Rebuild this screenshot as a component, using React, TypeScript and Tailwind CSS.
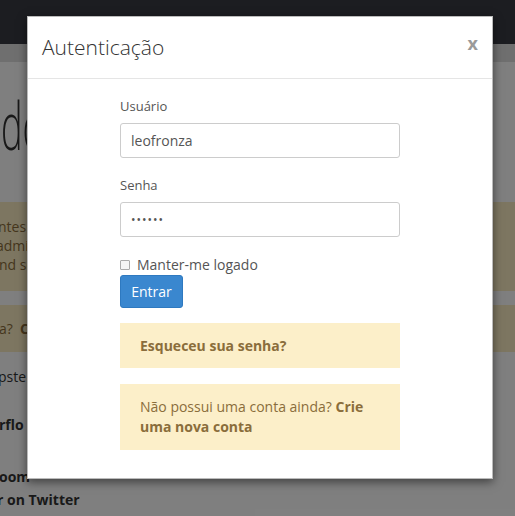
import React from "react";

export default function App() {
  const font = { fontFamily: '"Open Sans", "Noto Sans", sans-serif' };
  return (
    <div className="relative w-[515px] h-[516px] overflow-hidden bg-white" style={font}>
      {/* background page */}
      <div className="flex flex-col text-[14px] text-[#333]">
        <div className="h-[44px] bg-[#393b43]" />
        <div className="h-[18px] bg-[#dedede]" />
        <div className="h-[140px] pt-[22px] pl-[1px] text-[66px] font-light leading-[80px] text-[#333]">
          <span className="inline-block origin-left scale-x-[0.55]">do</span>
        </div>
        <div className="h-[89px] bg-[#fbedc2] text-[#8a6d3b] pt-[15px] leading-[19px] flex flex-col">
          <span className="-ml-[2px]">ntes</span>
          <span className="-ml-[4px]">admi</span>
          <span className="-ml-[1px]">nd se</span>
        </div>
        <div className="h-[14px]" />
        <div className="h-[47px] bg-[#fbedc2] text-[#8a6d3b] leading-[47px] -ml-[1px]">
          a?&nbsp;&nbsp;<b>C</b>
        </div>
        <div className="h-[50px] leading-[50px] -ml-[2px]">pste</div>
        <div className="h-[45px] leading-[45px] font-bold -ml-[1px]">rflo</div>
        <div className="h-[18px]" />
        <div className="leading-[24px] font-bold -ml-[1px]">oom</div>
        <div className="leading-[22px] font-bold -ml-[3px]">r on Twitter</div>
      </div>

      {/* backdrop */}
      <div className="absolute inset-0 bg-black/50" />

      {/* modal */}
      <div className="absolute left-[27px] top-[16px] w-[466px] h-[463px] bg-white border border-[#bbb] shadow-[0_3px_9px_rgba(0,0,0,0.5)] flex flex-col">
        <div className="h-[62px] border-b border-[#e5e5e5] flex items-center justify-between pl-[14px] pr-[14px]">
          <h4 className="text-[21px] font-light text-[#333] leading-none">Autenticação</h4>
          <button className="text-[18px] font-bold text-[#9a9a9a] leading-none -mt-[10px]">x</button>
        </div>
        <div className="flex flex-col px-[92px] pt-[17px] text-[14px] text-[#555]">
          <label className="leading-[20px] mb-[7px] text-[13px]">Usuário</label>
          <div className="h-[35px] border border-[#ccc] rounded-[3px] px-[10px] flex items-center text-[14px] text-[#555]">leofronza</div>
          <label className="leading-[20px] mt-[17px] mb-[7px] text-[13px]">Senha</label>
          <div className="h-[35px] border border-[#ccc] rounded-[3px] px-[10px] flex items-center text-[12px] tracking-[1px] text-[#555]">••••••</div>
          <div className="flex items-center gap-[7px] mt-[18px] h-[20px] leading-[20px]">
            <span className="w-[10px] h-[10px] border border-[#aaa] rounded-[1px] bg-[#f4f4f4]" />
            <span className="text-[14px] text-[#555]">Manter-me logado</span>
          </div>
          <div className="flex">
            <button className="h-[33px] w-[63px] bg-[#3a87cf] text-white text-[14px] rounded-[3px] border border-[#2e79c0]">Entrar</button>
          </div>
          <div className="mt-[15px] h-[45px] bg-[#fcefc9] text-[#8a6d3b] px-[20px] flex items-center font-bold leading-[20px]">
            Esqueceu sua senha?
          </div>
          <div className="mt-[16px] h-[66px] bg-[#fcefc9] text-[#8a6d3b] px-[20px] flex items-center leading-[20px]">
            <div>
              Não possui uma conta ainda? <b>Crie</b>
              <br />
              <b>uma nova conta</b>
            </div>
          </div>
        </div>
      </div>
    </div>
  );
}
